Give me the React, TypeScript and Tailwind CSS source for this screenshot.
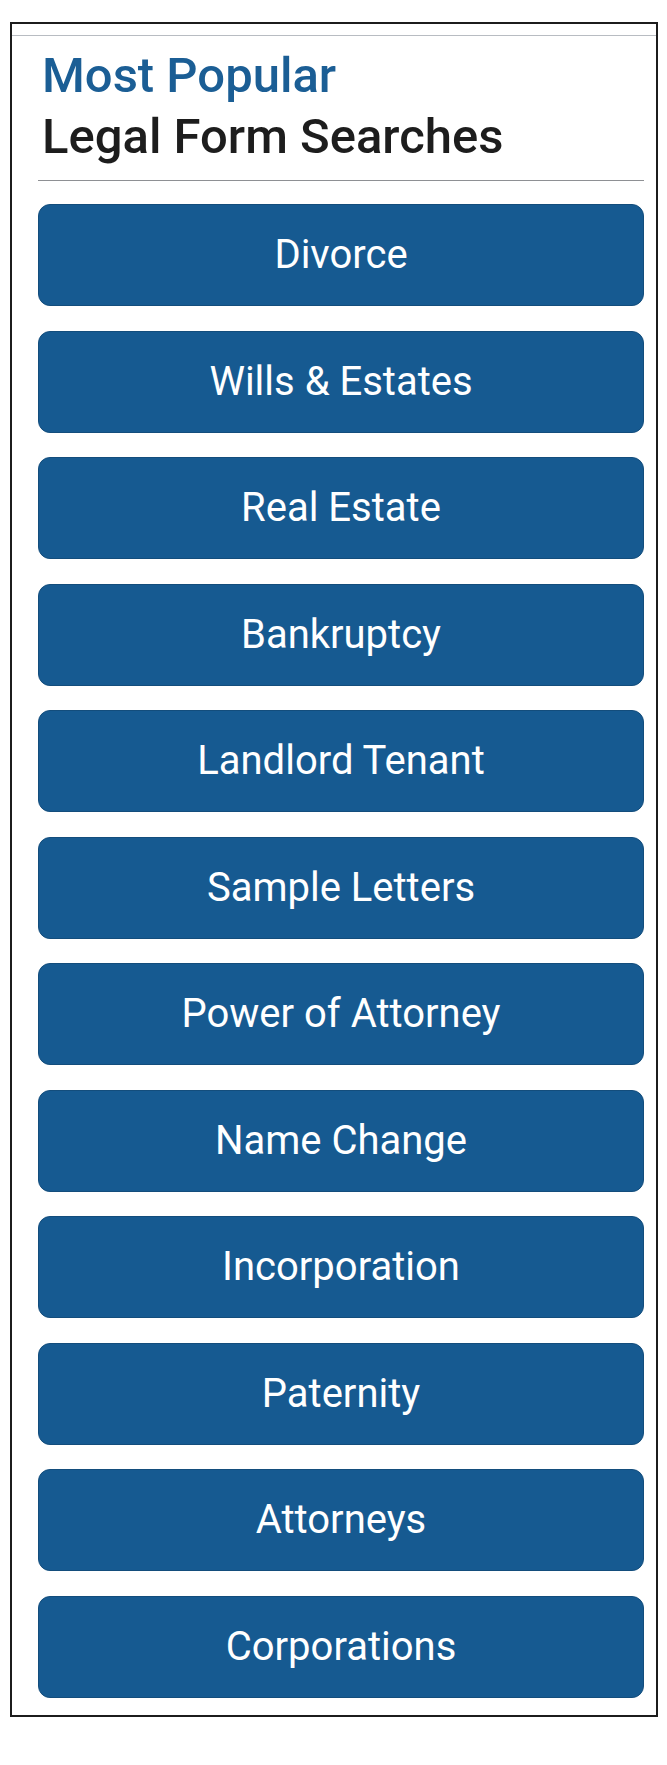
const searches = [
  "Divorce",
  "Wills & Estates",
  "Real Estate",
  "Bankruptcy",
  "Landlord Tenant",
  "Sample Letters",
  "Power of Attorney",
  "Name Change",
  "Incorporation",
  "Paternity",
  "Attorneys",
  "Corporations",
];

export default function App() {
  return (
    <div className="min-h-[1765px] bg-white pl-[10px] pt-[22px] font-['Roboto',_'Liberation_Sans',_sans-serif]">
      <div className="w-[648px] border-2 border-[#1c1c1c] bg-white pt-[11px] pb-[17px]">
        <div className="h-px bg-[#b8bcc2]" />
        <div className="pl-[26px] pr-[12px]">
          <h2 className="mt-[9px] pl-[4px] text-[49px] leading-[61px] font-medium">
            <span className="block text-[#1b5e95]">Most Popular</span>
            <span className="block text-[#1d1d1d]">Legal Form Searches</span>
          </h2>
          <div className="mt-[13px] h-px bg-[#8e9094]" />
          <div className="mt-[23px] flex flex-col gap-[24.5px]">
            {searches.map((label) => (
              <a
                key={label}
                href="#"
                className="flex h-[102px] items-center justify-center rounded-[12px] border border-[#134d7c] bg-[#165a91] text-[40px] text-white"
              >
                {label}
              </a>
            ))}
          </div>
        </div>
      </div>
    </div>
  );
}
